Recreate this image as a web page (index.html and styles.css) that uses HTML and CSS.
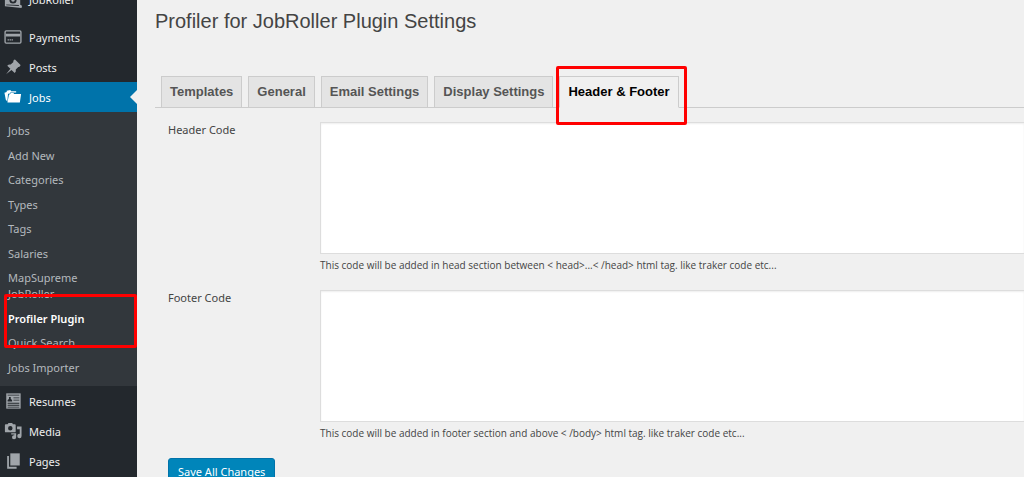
FILE: index.html
```html
<!DOCTYPE html>
<html lang="en">
<head>
<meta charset="utf-8">
<title>Profiler for JobRoller Plugin Settings</title>
<link rel="stylesheet" href="styles.css">
</head>
<body>
<div class="layout">
  <nav class="sidebar" aria-label="Admin menu">
    <ul class="menu">
      <li class="group-end"><a class="menu-link" href="#">
        <svg class="icon" viewBox="0 0 20 20"><path fill="currentColor" d="M1 5l17-1v12.500l2 1-.5 2.500L1 18z"/><path fill="#23282d" d="M2.500 16l14 .8v1l-14-.8z"/><circle cx="10" cy="11" r="4" fill="#23282d"/><circle cx="10" cy="11" r="2" fill="currentColor"/></svg>
        JobRoller</a></li>
      <li><a class="menu-link" href="#">
        <svg class="icon" viewBox="0 0 20 20"><rect x="1.200" y="3.200" width="17.600" height="13.600" rx="1.200" fill="none" stroke="currentColor" stroke-width="1.500"/><path fill="currentColor" d="M2 6.500h16v3H2zM4 12.500h1.500v1.300H4zm2.200 0h1.500v1.300H6.200zm2.200 0h1.500v1.300H8.400z"/></svg>
        Payments</a></li>
      <li><a class="menu-link" href="#">
        <svg class="icon" viewBox="0 0 20 20"><path fill="currentColor" d="M10.400 3l1-1.100q.6-.5 1.100 0l5.600 5.600q.5.6 0 1.100l-1 1q-.5.5-1.200.3l-2.800 3q.6 2.300-1.200 3.900l-3.600-3.600-6 4.800 4.800-6-3.500-3.500Q5.200 6.800 7.400 7.300l3.100-2.900q-.4-.8-.1-1.400z"/></svg>
        Posts</a></li>
      <li><a class="menu-link current" href="#">
        <svg class="icon" viewBox="0 0 20 20"><path fill="currentColor" d="M.5 5.200L3 4.500V3l4-.7 1 1.400h5.500V5H7l-.8 1.300-1.700.2L3.700 15 2 13z"/><path fill="currentColor" d="M5.500 7.500l1.300-.9.700-1.100h3l.7 1.200H19l-1.400 9.300H3.800z"/></svg>
        Jobs</a>
        <ul class="submenu">
          <li><a href="#">Jobs</a></li>
          <li><a href="#">Add New</a></li>
          <li><a href="#">Categories</a></li>
          <li><a href="#">Types</a></li>
          <li><a href="#">Tags</a></li>
          <li><a href="#">Salaries</a></li>
          <li><a href="#">MapSupreme<br>JobRoller</a></li>
          <li class="marked-item"><a class="selected" href="#">Profiler Plugin</a></li>
          <li><a href="#">Quick Search</a></li>
          <li><a href="#">Jobs Importer</a></li>
        </ul>
      </li>
      <li><a class="menu-link" href="#">
        <svg class="icon" viewBox="0 0 20 20"><path fill="currentColor" d="M2.500 1.500h16v17h-16z"/><path fill="#23282d" d="M4 3h13v.8H4zM10.500 6H17v1h-6.500zM10.500 8.500H17v1h-6.500zM4 12h13v1H4zM4 14.300h13v1H4zM4 16.500h13v.8H4zM4 10.500V8.800l1.500-1V5.500h2v2.300l1.500 1v1.700z"/></svg>
        Resumes</a></li>
      <li><a class="menu-link" href="#">
        <svg class="icon" viewBox="0 0 20 20"><path fill="currentColor" fill-rule="evenodd" d="M2 2.500h2L5 1h4l1 1.500h2q1 0 1 1v7q0 1-1 1H2q-1 0-1-1v-7q0-1 1-1zm5 2a2.500 2.500 0 1 0 0 5 2.500 2.500 0 0 0 0-5z"/><path fill="currentColor" d="M14.500 5H19.500v10.500a2.400 2.400 0 1 1-2-2.300V8h-3zM8 12.500h5.500V17a2.300 2.300 0 1 1-2-2.300V14H8z"/></svg>
        Media</a></li>
      <li><a class="menu-link" href="#">
        <svg class="icon" viewBox="0 0 20 20"><path fill="currentColor" d="M7 1.500h10.500V15H7z"/><path fill="currentColor" d="M3.500 4.500h2v12H14v2H3.500z"/></svg>
        Pages</a></li>
    </ul>
  </nav>

  <main class="content">
    <h1 class="title">Profiler for JobRoller Plugin Settings</h1>
    <div class="tabs">
      <a class="tab" href="#">Templates</a>
      <a class="tab" href="#">General</a>
      <a class="tab" href="#">Email Settings</a>
      <a class="tab" href="#">Display Settings</a>
      <a class="tab active" href="#">Header &amp; Footer</a>
    </div>
    <form class="form">
      <div class="field">
        <label class="label" for="header-code">Header Code</label>
        <div class="control">
          <textarea class="code" id="header-code"></textarea>
          <p class="help">This code will be added in head section between &lt; head&gt;...&lt; /head&gt; html tag. like traker code etc...</p>
        </div>
      </div>
      <div class="field">
        <label class="label" for="footer-code">Footer Code</label>
        <div class="control">
          <textarea class="code" id="footer-code"></textarea>
          <p class="help">This code will be added in footer section and above &lt; /body&gt; html tag. like traker code etc...</p>
        </div>
      </div>
      <button class="save" type="submit">Save All Changes</button>
    </form>
  </main>
</div>
</body>
</html>
```
FILE: styles.css
```css
* { box-sizing: border-box; }

body {
  margin: 0;
  height: 100vh;
  overflow: hidden;
  background: #f0f0f0;
  color: #444;
  font-family: "Noto Sans", "Open Sans", sans-serif;
  font-size: 11px;
}

a { color: inherit; text-decoration: none; }

ul { margin: 0; padding: 0; list-style: none; }

.layout { display: flex; height: 100%; }

.sidebar {
  flex: 0 0 137px;
  background: #23282d;
  color: #eee;
}

.menu { margin-top: -16px; }

.group-end { margin-bottom: 8px; }

.menu-link {
  display: flex;
  align-items: center;
  gap: 7px;
  height: 30px;
  padding-left: 4px;
}

.icon {
  width: 18px;
  height: 18px;
  color: #a0a5aa;
}

.current {
  position: relative;
  background: #0073aa;
  color: #fff;
}

.current .icon { color: #fff; }

.current::after {
  content: "";
  position: absolute;
  right: 0;
  top: 8px;
  border: 7px solid transparent;
  border-left-width: 0;
  border-right-color: #f0f0f0;
}

.submenu {
  display: flex;
  flex-direction: column;
  justify-content: space-between;
  height: 274px;
  padding: 11px 8px 10px;
  background: #32373c;
  color: #b4b9be;
  line-height: 16px;
}

.submenu a { display: block; }

.submenu .selected { color: #fff; font-weight: 600; }

.marked-item { position: relative; }

.marked-item::after,
.active::after {
  content: "";
  position: absolute;
  border: 3px solid #f00;
  border-radius: 2px;
  pointer-events: none;
}

.marked-item::after { inset: -17px -8px -21px -4px; }

.content {
  flex: 1;
  min-width: 0;
  padding: 9px 0 0 18px;
}

.title {
  margin: 0;
  font: 400 20px/24px "Liberation Sans", Arial, sans-serif;
}

.tabs {
  display: flex;
  gap: 6px;
  margin-top: 43px;
  padding-left: 6px;
  border-bottom: 1px solid #ccc;
}

.tab {
  margin-bottom: -1px;
  padding: 3px 8px;
  border: 1px solid #ccc;
  background: #e4e4e4;
  color: #555;
  font: 700 13px/24px "Liberation Sans", Arial, sans-serif;
}

.tab.active {
  position: relative;
  border-bottom-color: #f0f0f0;
  background: #f0f0f0;
  color: #000;
}

.active::after { inset: -11px -9px -18px -4px; }

.form { padding: 14px 0 0 13px; }

.field {
  display: flex;
  margin-bottom: 17px;
}

.label { flex: 0 0 152px; line-height: 16px; }

.control { flex: 1; }

.code {
  display: block;
  width: 100%;
  height: 132px;
  border: 1px solid #ddd;
  border-right: 0;
  background: #fff;
  box-shadow: inset 0 1px 2px rgba(0, 0, 0, 0.07);
  resize: none;
}

.help {
  margin: 3px 0 0;
  font-family: "Open Sans", "Noto Sans", sans-serif;
  font-size: 10px;
  line-height: 16px;
}

.save {
  height: 26px;
  padding: 0 9px;
  border: 1px solid #0073aa;
  border-radius: 3px;
  background: #0085ba;
  color: #fff;
  font: inherit;
}
```
